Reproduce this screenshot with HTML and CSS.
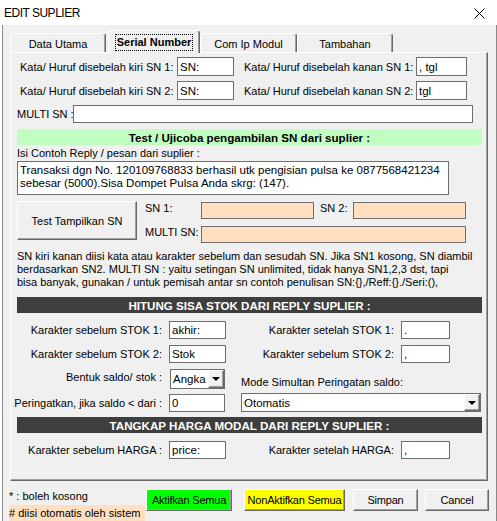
FILE: index.html
```html
<!DOCTYPE html>
<html>
<head>
<meta charset="utf-8">
<link rel="stylesheet" href="styles.css">
</head>
<body>
<div class="window">
  <div class="titlebar">
    <span class="title">EDIT SUPLIER</span>
    <svg class="close" width="11" height="11" viewBox="0 0 11 11"><path d="M0.5 0.5 L10.5 10.5 M10.5 0.5 L0.5 10.5" stroke="#000" stroke-width="1" fill="none"/></svg>
  </div>
  <div class="client">
    <div class="tabs">
      <div class="tab t1">Data Utama</div>
      <div class="tab t2 active"><span class="focus">Serial Number</span></div>
      <div class="tab t3">Com Ip Modul</div>
      <div class="tab t4">Tambahan</div>
    </div>
    <div class="panel">
      <div class="row r1">
        <span class="lbl l-kiri">Kata/ Huruf disebelah kiri SN 1:</span>
        <div class="field f-kiri">SN:</div>
        <span class="lbl l-kanan">Kata/ Huruf disebelah kanan SN 1:</span>
        <div class="field f-kanan">, tgl</div>
      </div>
      <div class="row r1 r2">
        <span class="lbl l-kiri">Kata/ Huruf disebelah kiri SN 2:</span>
        <div class="field f-kiri">SN:</div>
        <span class="lbl l-kanan">Kata/ Huruf disebelah kanan SN 2:</span>
        <div class="field f-kanan">tgl</div>
      </div>
      <div class="row r-multi">
        <span class="lbl l-multi">MULTI SN :</span>
        <div class="field f-multi"></div>
      </div>
      <div class="band green">Test / Ujicoba pengambilan SN dari suplier :</div>
      <div class="lbl l-isi">Isi Contoh Reply / pesan dari suplier :</div>
      <div class="textarea">Transaksi dgn No. 120109768833 berhasil utk pengisian pulsa ke 0877568421234<br>sebesar (5000).Sisa Dompet Pulsa Anda skrg: (147).</div>
      <div class="test">
        <div class="btn btn-test">Test Tampilkan SN</div>
        <div class="sn-grid">
          <span class="lbl">SN 1:</span>
          <div class="field peach"></div>
          <span class="lbl l-sn2">SN 2:</span>
          <div class="field peach"></div>
          <span class="lbl">MULTI SN:</span>
          <div class="field peach span3"></div>
        </div>
      </div>
      <p class="note">SN kiri kanan diisi kata atau karakter sebelum dan sesudah SN. Jika SN1 kosong, SN diambil<br>berdasarkan SN2. MULTI SN : yaitu setingan SN unlimited, tidak hanya SN1,2,3 dst, tapi<br>bisa banyak, gunakan / untuk pemisah antar sn contoh penulisan SN:{},/Reff:{}./Seri:(),</p>
      <div class="band dark b-stok">HITUNG SISA STOK DARI REPLY SUPLIER :</div>
      <div class="row r-stok s1">
        <span class="lbl l-left">Karakter sebelum STOK 1:</span>
        <div class="field f-left">akhir:</div>
        <span class="lbl l-right">Karakter setelah STOK 1:</span>
        <div class="field f-right">.</div>
      </div>
      <div class="row r-stok s2">
        <span class="lbl l-left">Karakter sebelum STOK 2:</span>
        <div class="field f-left">Stok</div>
        <span class="lbl l-right">Karakter sebelum STOK 2:</span>
        <div class="field f-right">,</div>
      </div>
      <div class="row r-bentuk">
        <span class="lbl l-left l-top">Bentuk saldo/ stok :</span>
        <div class="select sel-angka"><span class="sel-text">Angka</span><span class="sel-btn"><i class="tri"></i></span></div>
        <span class="lbl l-mode">Mode Simultan Peringatan saldo:</span>
      </div>
      <div class="row r-saldo">
        <span class="lbl l-left">Peringatkan, jika saldo &lt; dari :</span>
        <div class="field f-saldo">0</div>
        <div class="select sel-mode"><span class="sel-text">Otomatis</span><span class="sel-btn"><i class="tri"></i></span></div>
      </div>
      <div class="band dark b-harga">TANGKAP HARGA MODAL DARI REPLY SUPLIER :</div>
      <div class="row r-stok r-harga">
        <span class="lbl l-left">Karakter sebelum HARGA :</span>
        <div class="field f-left">price:</div>
        <span class="lbl l-right">Karakter setelah HARGA:</span>
        <div class="field f-right">,</div>
      </div>
    </div>
    <div class="footer">
      <div class="notes">
        <div class="n1">* : boleh kosong</div>
        <div class="n2"># diisi otomatis oleh sistem</div>
      </div>
      <div class="btn b-green">Aktifkan Semua</div>
      <div class="btn b-yellow">NonAktifkan Semua</div>
      <div class="btn b-simpan">Simpan</div>
      <div class="btn b-cancel">Cancel</div>
    </div>
  </div>
</div>
</body>
</html>
```
FILE: styles.css
```css
* { box-sizing: border-box; }
body {
  margin: 0;
  font-family: "Liberation Sans", Arial, sans-serif;
  font-size: 11px;
  color: #000;
  background: #fff;
}
.window {
  width: 497px;
  height: 521px;
  background: #fff;
  overflow: hidden;
}
.titlebar {
  height: 25px;
  display: flex;
  align-items: center;
  justify-content: space-between;
  padding: 0 12px 0 4px;
}
.title {
  font-size: 12px;
  letter-spacing: -0.5px;
}
.close { display: block; margin-top: 2px; }
.client {
  height: 496px;
  margin-left: 2px;
  border-left: 1px solid #8a8a8a;
  border-right: 1px solid #8a8a8a;
  background: #f0f0f0;
}
.tabs {
  height: 27px;
  display: flex;
  align-items: flex-end;
  padding-left: 7px;
}
.tab {
  height: 19px;
  background: #f0f0f0;
  border: 1px solid;
  border-bottom: none;
  border-color: #fff #696969 transparent #fff;
  border-radius: 3px 3px 0 0;
  box-shadow: inset -1px 0 #a0a0a0;
  display: flex;
  align-items: center;
  justify-content: center;
  padding-top: 2px;
  white-space: nowrap;
}
.t1 { width: 96px; }
.t2 { width: 92px; margin-left: 2px; }
.t3 { width: 97px; }
.t4 { width: 96px; }
.active {
  height: 23px;
  margin-bottom: -1px;
  position: relative;
  z-index: 1;
  font-weight: bold;
  padding-top: 0;
}
.focus {
  outline: 1px dotted #000;
  outline-offset: 0;
  padding: 1px 1px;
  line-height: 13px;
}
.panel {
  margin-left: 7px;
  width: 478px;
  height: 429px;
  border: 1px solid;
  border-color: #fff #696969 #696969 #fff;
  box-shadow: inset -1px -1px #a0a0a0;
  padding: 4px 0 0 6px;
  display: flex;
  flex-direction: column;
}
.row { display: flex; align-items: center; }
.lbl { white-space: nowrap; }
.field {
  background: #fff;
  border: 1px solid #6e6e6e;
  height: 19px;
  padding: 0 2px;
  display: flex;
  align-items: center;
  white-space: nowrap;
  overflow: hidden;
  font-size: 11.5px;
}
.r1 { height: 19px; padding-left: 3px; }
.r2 { margin-top: 5px; }
.l-kiri { width: 157px; }
.f-kiri { width: 57px; }
.l-kanan { width: 172px; margin-left: 10px; }
.f-kanan { width: 51px; }
.r-multi { margin-top: 5px; height: 18px; }
.l-multi { width: 56px; }
.f-multi { width: 400px; height: 18px; }
.band {
  width: 465px;
  height: 16px;
  font-weight: bold;
  font-size: 11.6px;
  display: flex;
  align-items: center;
  justify-content: center;
  white-space: nowrap;
}
.green { background: #c0ffc0; margin-top: 6px; }
.dark { background: #3e3e3e; color: #fff; }
.l-isi { height: 16px; line-height: 16px; }
.textarea {
  width: 432px;
  height: 34px;
  background: #fff;
  border: 1px solid #6e6e6e;
  padding: 2px 2px 0 2px;
  line-height: 13px;
  font-size: 11.5px;
  white-space: nowrap;
}
.test { display: flex; margin-top: 6px; }
.btn {
  background: #f0f0f0;
  border: 1px solid;
  border-color: #fff #696969 #696969 #fff;
  box-shadow: inset -1px -1px #a0a0a0;
  display: flex;
  align-items: center;
  justify-content: center;
  white-space: nowrap;
}
.btn-test { width: 120px; height: 39px; }
.sn-grid {
  margin-left: 8px;
  margin-top: 1px;
  display: grid;
  grid-template-columns: 56px 113px 6px 33px 113px;
  grid-template-rows: 17px 17px;
  row-gap: 7px;
  align-items: center;
}
.sn-grid .lbl { align-self: start; line-height: 13px; }
.l-sn2 { grid-column: 4; }
.sn-grid .field:nth-of-type(2) { grid-column: 5; }
.peach { background: #ffdfc0; height: 17px; }
.span3 { grid-column: 2 / 6; }
.note {
  margin: 7px 0 0 0;
  line-height: 13px;
  white-space: nowrap;
}
.b-stok { margin-top: 8px; }
.r-stok { height: 18px; margin-top: 8px; }
.s2 { margin-top: 6px; }
.l-left {
  width: 145px;
  display: flex;
  justify-content: flex-end;
}
.f-left { width: 57px; height: 18px; margin-left: 7px; }
.l-right {
  width: 168px;
  display: flex;
  justify-content: flex-end;
}
.f-right { width: 49px; height: 18px; margin-left: 7px; }
.r-bentuk { height: 20px; margin-top: 6px; align-items: stretch; }
.l-top { align-items: flex-start; line-height: 16px; }
.select {
  display: flex;
  background: #fff;
  border: 1px solid #6e6e6e;
  font-size: 11.5px;
}
.sel-text {
  flex: 1;
  padding-left: 2px;
  display: flex;
  align-items: center;
  overflow: hidden;
  white-space: nowrap;
}
.sel-btn {
  width: 16px;
  background: #f0f0f0;
  border: 1px solid;
  border-color: #fff #696969 #696969 #fff;
  box-shadow: inset -1px -1px #a0a0a0;
  display: flex;
  align-items: center;
  justify-content: center;
}
.tri {
  width: 0;
  height: 0;
  border-left: 4px solid transparent;
  border-right: 4px solid transparent;
  border-top: 4px solid #000;
}
.sel-angka { width: 55px; height: 20px; margin-left: 8px; }
.l-mode { align-self: flex-end; margin-left: 16px; line-height: 13px; }
.r-saldo { height: 19px; margin-top: 4px; }
.f-saldo { width: 56px; height: 18px; margin-left: 7px; }
.sel-mode { width: 240px; height: 19px; margin-left: 16px; }
.b-harga { margin-top: 5px; }
.r-harga { margin-top: 8px; }
.footer {
  display: flex;
  align-items: flex-start;
  padding-left: 6px;
}
.notes { width: 137px; padding-top: 7px; }
.n1 { height: 16px; line-height: 16px; }
.n2 {
  width: 136px;
  height: 16px;
  line-height: 16px;
  margin-top: 1px;
  background: #ffdfc0;
  white-space: nowrap;
}
.footer .btn { height: 22px; margin-top: 8px; letter-spacing: -0.2px; }
.b-green { width: 86px; background: #00ff00; }
.b-yellow { width: 101px; margin-left: 12px; background: #ffff00; }
.b-simpan { width: 65px; margin-left: 8px; }
.b-cancel { width: 64px; margin-left: 7px; }
```
